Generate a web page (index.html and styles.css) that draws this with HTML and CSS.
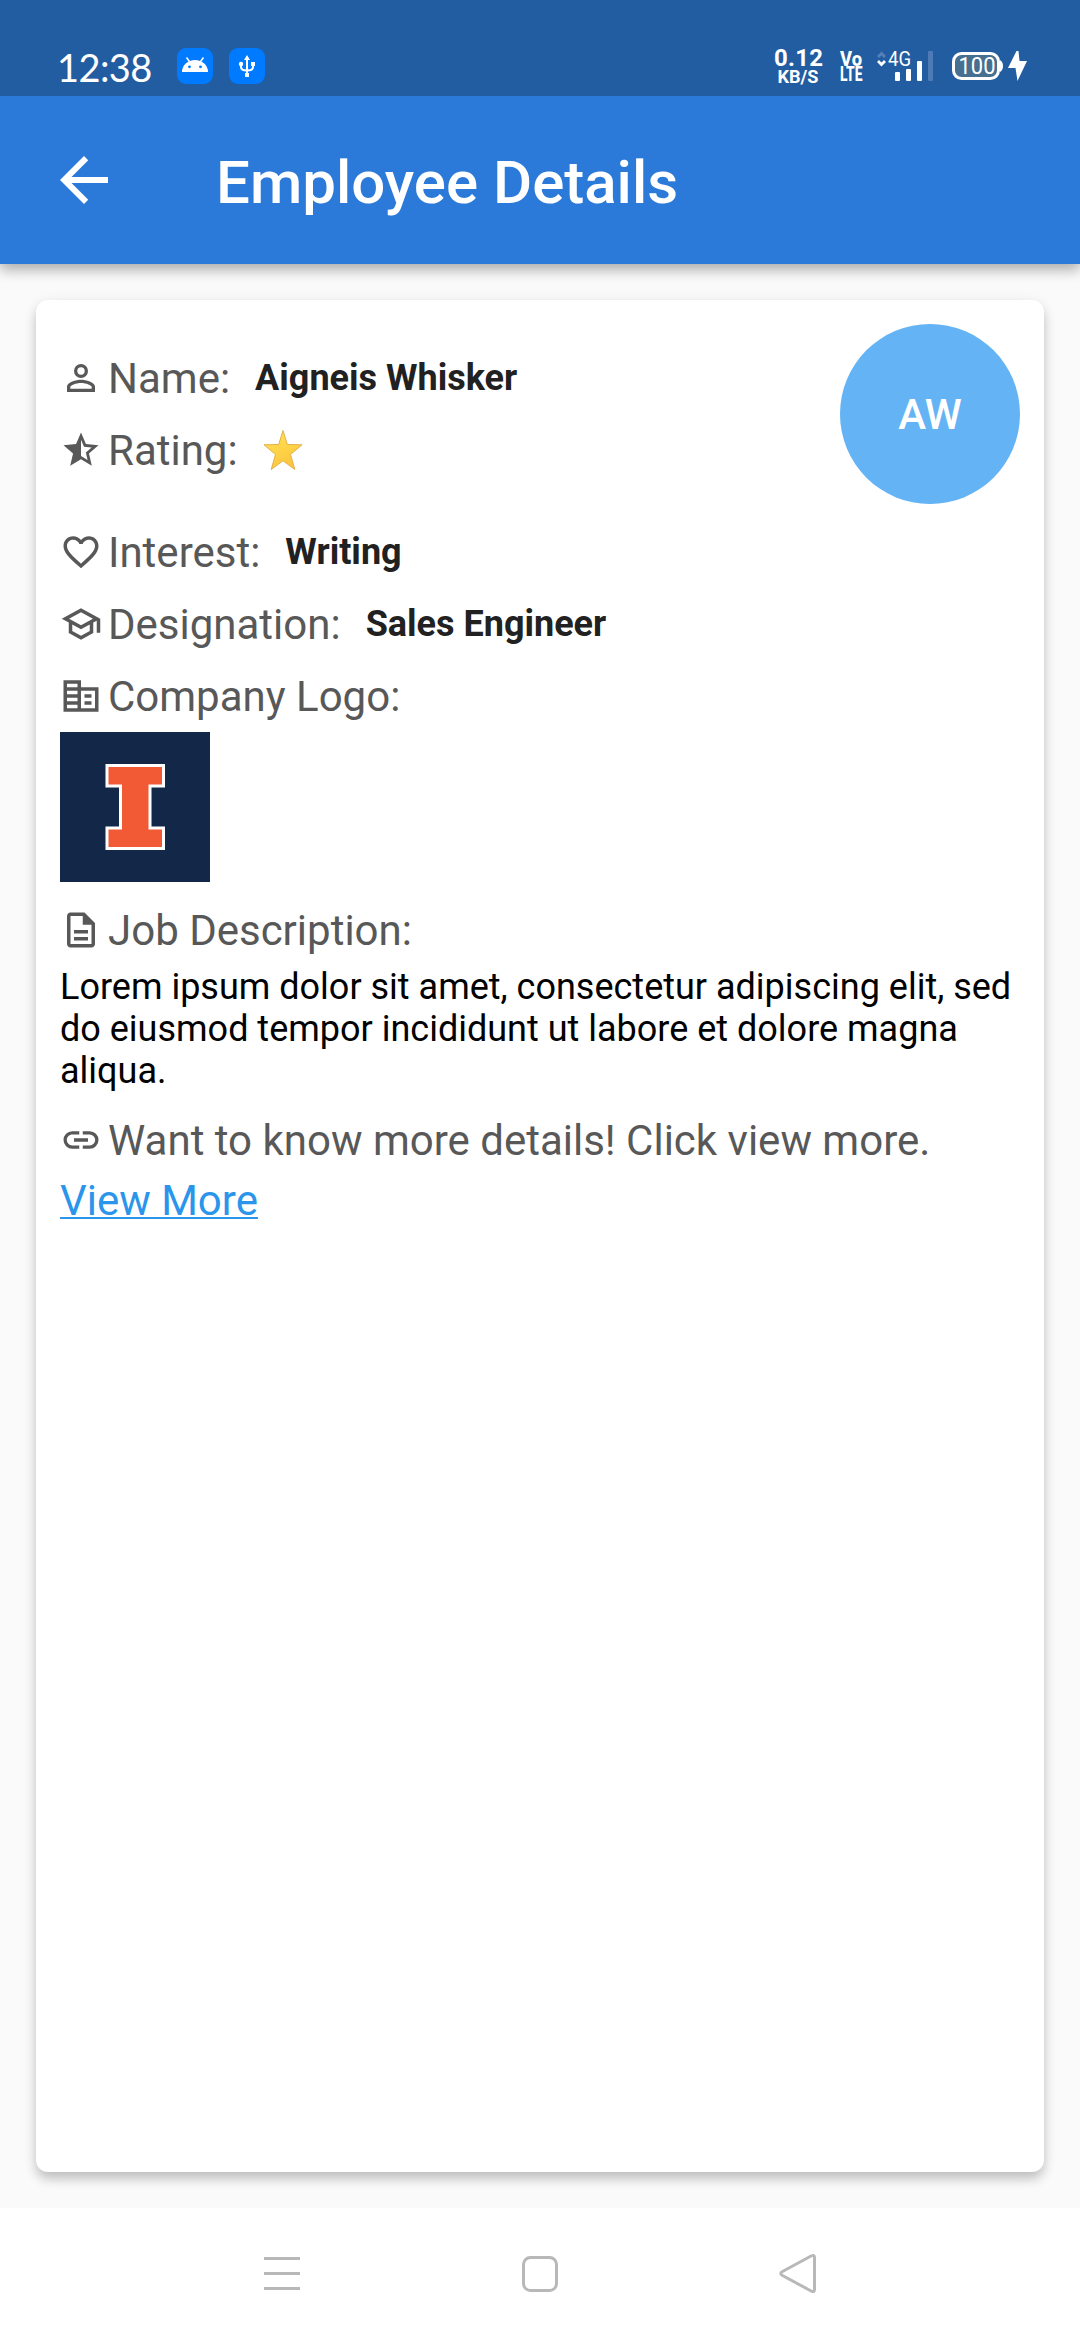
FILE: index.html
```html
<!DOCTYPE html>
<html lang="en">
<head>
<meta charset="utf-8">
<title>Employee Details</title>
<link rel="stylesheet" href="styles.css">
</head>
<body>
<div class="screen">
  <div class="status-bar">
    <span class="clock">12:38</span>
    <svg class="tile" viewBox="0 0 36 36"><rect width="36" height="36" rx="9" fill="#007bff"/><path d="M5 24a13 12 0 0 1 26 0z" fill="#fff"/><path d="M9.500 9.500l4 5.500M26.500 9.500l-4 5.500" stroke="#fff" stroke-width="1.500"/><circle cx="12.500" cy="18.800" r="1.400" fill="#007bff"/><circle cx="23.500" cy="18.800" r="1.400" fill="#007bff"/></svg>
    <svg class="tile" viewBox="0 0 36 36"><rect width="36" height="36" rx="9" fill="#007bff"/><g fill="none" stroke="#fff" stroke-width="2"><path d="M18 9v17M12 17v2q0 3.500 6 3.500t6-3.500v-3"/></g><g fill="#fff"><path d="M18 7l3 5h-6zM22 14h4v4h-4z"/><circle cx="12" cy="16" r="2.200"/><rect x="16" y="25" width="4" height="4"/></g></svg>
    <svg class="indicators" viewBox="0 -6 264 46">
      <g fill="#fff" font-family="Roboto, sans-serif">
        <text x="3" y="20" font-size="24" font-weight="700" textLength="49" lengthAdjust="spacing">0.12</text>
        <text x="6.500" y="37" font-size="18" font-weight="700" textLength="41" lengthAdjust="spacingAndGlyphs">KB/S</text>
        <text x="69" y="20" font-size="20" font-weight="800" textLength="22" lengthAdjust="spacingAndGlyphs">Vo</text>
        <text x="69" y="35" font-size="19.500" font-weight="800" textLength="22.500" lengthAdjust="spacingAndGlyphs">LTE</text>
        <text x="117" y="20" font-size="20.500" textLength="23" lengthAdjust="spacingAndGlyphs">4G</text>
      </g>
      <path d="M107 11l3.500-3.500 3.500 3.500" fill="none" stroke="#5580b8" stroke-width="2.800"/>
      <path d="M107 15l3.500 3.500 3.500-3.500" fill="none" stroke="#fff" stroke-width="2.800"/>
      <g fill="#fff"><rect x="124" y="26" width="5" height="9" rx="1"/><rect x="135" y="23" width="5" height="12" rx="1"/><rect x="146" y="15" width="5" height="20" rx="1"/></g>
      <rect x="157" y="5" width="5" height="30" rx="1" fill="#4e7ab5"/>
      <rect x="182.500" y="7.500" width="45" height="25" rx="8" fill="#466f90" stroke="#fff" stroke-width="3"/>
      <path d="M229 14q3 2 3 6t-3 6z" fill="#fff"/>
      <text x="187.500" y="28" font-family="Roboto, sans-serif" font-size="24" font-weight="400" fill="#fff" textLength="37" lengthAdjust="spacingAndGlyphs">100</text>
      <path d="M245.500 5l-8.500 17h7.500l2 13 9.500-20h-7.500l-1-10z" fill="#fff"/>
    </svg>
  </div>
  <header class="app-bar">
    <svg class="back" viewBox="0 0 24 24"><path d="M20 11H7.830l5.590-5.590L12 4l-8 8 8 8 1.410-1.410L7.830 13H20v-2z"/></svg>
    <h1 class="title">Employee Details</h1>
  </header>
  <main class="content">
    <section class="card">
      <div class="summary">
        <div class="summary-rows">
          <div class="row">
            <svg class="icon" viewBox="0 0 24 24"><path d="M12 5.900a2.100 2.100 0 1 1 0 4.200 2.100 2.100 0 0 1 0-4.200m0 9c2.970 0 6.100 1.460 6.100 2.100v1.100H5.900V17c0-.640 3.130-2.100 6.100-2.100M12 4a4 4 0 1 0 0 8 4 4 0 0 0 0-8m0 9c-2.670 0-8 1.340-8 4v3h16v-3c0-2.660-5.330-4-8-4z"/></svg>
            <span class="label">Name:</span><span class="value">Aigneis Whisker</span>
          </div>
          <div class="row">
            <svg class="icon" viewBox="0 0 24 24"><path d="M22 9.240l-7.190-.620L12 2 9.190 8.630 2 9.240l5.460 4.730L5.820 21 12 17.270 18.180 21l-1.630-7.030L22 9.240zM12 15.400V6.100l1.710 4.040 4.380.380-3.320 2.880 1 4.280L12 15.400z"/></svg>
            <span class="label">Rating:</span>
            <svg class="star" viewBox="0 0 40 42"><defs><linearGradient id="gold" x1="0" y1="0" x2="0.400" y2="1"><stop offset="0.200" stop-color="#ffe04f"/><stop offset="1" stop-color="#fdc53f"/></linearGradient></defs><path d="M20 1.500l4.300 14 14.700.300-11.500 9.700 4.300 15L20 31.800 8.200 40.500l4.300-15L1 15.800l14.700-.300z" fill="url(#gold)" stroke="#e3b04b" stroke-width="1" stroke-linejoin="round"/></svg>
          </div>
        </div>
        <div class="avatar">AW</div>
      </div>
      <div class="group">
        <div class="row">
          <svg class="icon" viewBox="0 0 24 24"><path d="M16.500 3c-1.740 0-3.410.810-4.500 2.090C10.910 3.810 9.240 3 7.500 3 4.420 3 2 5.420 2 8.500c0 3.780 3.400 6.860 8.550 11.540L12 21.350l1.450-1.320C18.600 15.360 22 12.280 22 8.500 22 5.420 19.580 3 16.500 3zm-4.400 15.550l-.1.100-.1-.1C7.140 14.240 4 11.390 4 8.500 4 6.500 5.500 5 7.500 5c1.540 0 3.040.990 3.570 2.360h1.870C13.460 5.990 14.960 5 16.500 5c2 0 3.500 1.500 3.500 3.500 0 2.890-3.140 5.740-7.900 10.050z"/></svg>
          <span class="label">Interest:</span><span class="value">Writing</span>
        </div>
        <div class="row">
          <svg class="icon" viewBox="0 0 24 24"><path d="M12 3L1 9l4 2.180v6L12 21l7-3.820v-6l2-1.090V17h2V9L12 3zm6.820 6L12 12.720 5.180 9 12 5.280 18.820 9zM17 15.990l-5 2.730-5-2.730v-3.720L12 15l5-2.730v3.720z"/></svg>
          <span class="label">Designation:</span><span class="value">Sales Engineer</span>
        </div>
        <div class="row">
          <svg class="icon" viewBox="0 0 24 24"><path d="M12 7V3H2v18h20V7H12zm-2 12H4v-2h6v2zm0-4H4v-2h6v2zm0-4H4V9h6v2zm0-4H4V5h6v2zm10 12h-8V9h8v10zm-2-8h-4v2h4v-2zm0 4h-4v2h4v-2z"/></svg>
          <span class="label">Company Logo:</span>
        </div>
        <svg class="logo" viewBox="0 0 150 150"><rect width="150" height="150" fill="#132849"/><path d="M47 33.500h56.500v20.500h-13.500v42h13.500v20.500H47V96h13.500V54H47z" fill="#f15a35" stroke="#fff" stroke-width="3"/></svg>
      </div>
      <div class="group">
        <div class="row">
          <svg class="icon" viewBox="0 0 24 24"><path d="M8 16h8v2H8zm0-4h8v2H8zm6-10H6c-1.100 0-2 .900-2 2v16c0 1.100.890 2 1.990 2H18c1.100 0 2-.9 2-2V8l-6-6zm4 18H6V4h7v5h5v11z"/></svg>
          <span class="label">Job Description:</span>
        </div>
        <p class="description">Lorem ipsum dolor sit amet, consectetur adipiscing elit, sed do eiusmod tempor incididunt ut labore et dolore magna aliqua.</p>
      </div>
      <div class="group">
        <div class="row">
          <svg class="icon" viewBox="0 0 24 24"><path d="M3.900 12c0-1.710 1.390-3.100 3.100-3.100h4V7H7a5 5 0 0 0 0 10h4v-1.900H7c-1.710 0-3.100-1.390-3.100-3.100zM8 13h8v-2H8v2zm9-6h-4v1.900h4a3.100 3.100 0 0 1 0 6.200h-4V17h4a5 5 0 0 0 0-10z"/></svg>
          <span class="label">Want to know more details! Click view more.</span>
        </div>
        <a class="more">View More</a>
      </div>
    </section>
  </main>
  <nav class="nav-bar">
    <svg class="nav-icon" viewBox="0 0 42 42"><path d="M3 5.500h36M3 20.500h36M3 35.500h36"/></svg>
    <svg class="nav-icon" viewBox="0 0 42 42"><rect x="4.500" y="4.500" width="33" height="33" rx="7"/></svg>
    <svg class="nav-icon" viewBox="0 0 42 42"><path d="M5.500 18.500L34.500 2.800q3-1.300 3 1.700v32q0 3-3 1.700L5.500 22.500q-3.500-2 0-4z"/></svg>
  </nav>
</div>
</body>
</html>
```

FILE: styles.css
```css
* {
  box-sizing: border-box;
}

body {
  margin: 0;
  font-family: Roboto, sans-serif;
}

svg {
  display: block;
  flex: none;
}

.screen {
  display: flex;
  flex-direction: column;
  width: 1080px;
  height: 2340px;
  background: #fafafa;
}

.status-bar {
  position: relative;
  z-index: 1;
  display: flex;
  align-items: flex-start;
  height: 96px;
  padding: 40px 45px 0 57px;
  background: #225ca1;
}

.clock {
  width: 104px;
  margin-right: 16px;
  padding-top: 7px;
  font: 400 38px/40px Lato, sans-serif;
  letter-spacing: -0.6px;
  color: #fff;
}

.tile {
  width: 36px;
  height: 36px;
  margin: 8px 16px 0 0;
}

.indicators {
  width: 264px;
  height: 46px;
  margin-left: auto;
}

.app-bar {
  display: flex;
  align-items: center;
  gap: 96px;
  height: 168px;
  padding: 0 48px;
  background: #2b79d8;
  box-shadow: 0 6px 12px rgba(0, 0, 0, 0.22), 0 3px 16px rgba(0, 0, 0, 0.14);
}

.back {
  width: 72px;
  height: 72px;
  fill: #fff;
}

.title {
  margin: 0;
  padding-top: 5px;
  font-size: 60px;
  font-weight: 500;
  line-height: 70px;
  color: #fff;
}

.content {
  display: flex;
  flex: 1;
  padding: 36px;
}

.card {
  flex: 1;
  padding: 24px;
  background: #fff;
  border-radius: 12px;
  box-shadow: 0 8px 12px -1px rgba(0, 0, 0, 0.18), 0 3px 14px rgba(0, 0, 0, 0.1);
}

.summary {
  display: flex;
  align-items: center;
  justify-content: space-between;
}

.row {
  display: flex;
  align-items: center;
  height: 72px;
}

.icon {
  width: 42px;
  height: 42px;
  margin-right: 6px;
  fill: #585858;
}

.label {
  font-size: 42px;
  line-height: 49px;
  color: #585858;
  white-space: nowrap;
}

.value {
  margin-left: 25px;
  padding-bottom: 1px;
  font-size: 36px;
  font-weight: 700;
  line-height: 42px;
  color: #212121;
}

.star {
  width: 40px;
  height: 42px;
  margin-left: 25px;
}

.avatar {
  display: flex;
  align-items: center;
  justify-content: center;
  width: 180px;
  height: 180px;
  border-radius: 50%;
  background: #64b3f5;
  color: #fff;
  font-size: 42px;
  font-weight: 500;
}

.group {
  padding-top: 12px;
}

.logo {
  width: 150px;
  height: 150px;
}

.description {
  margin: 0;
  font-size: 36px;
  line-height: 42px;
  color: #000;
}

.more {
  display: block;
  width: max-content;
  font-size: 42px;
  line-height: 49px;
  color: #2a95ea;
  text-decoration: underline;
  text-decoration-thickness: 2px;
  text-underline-offset: 2px;
  text-decoration-skip-ink: none;
}

.nav-bar {
  display: flex;
  align-items: center;
  justify-content: space-between;
  height: 132px;
  padding: 0 261px;
  background: #fff;
}

.nav-icon {
  width: 42px;
  height: 42px;
  fill: none;
  stroke: #b8b8b8;
  stroke-width: 3;
}
```
